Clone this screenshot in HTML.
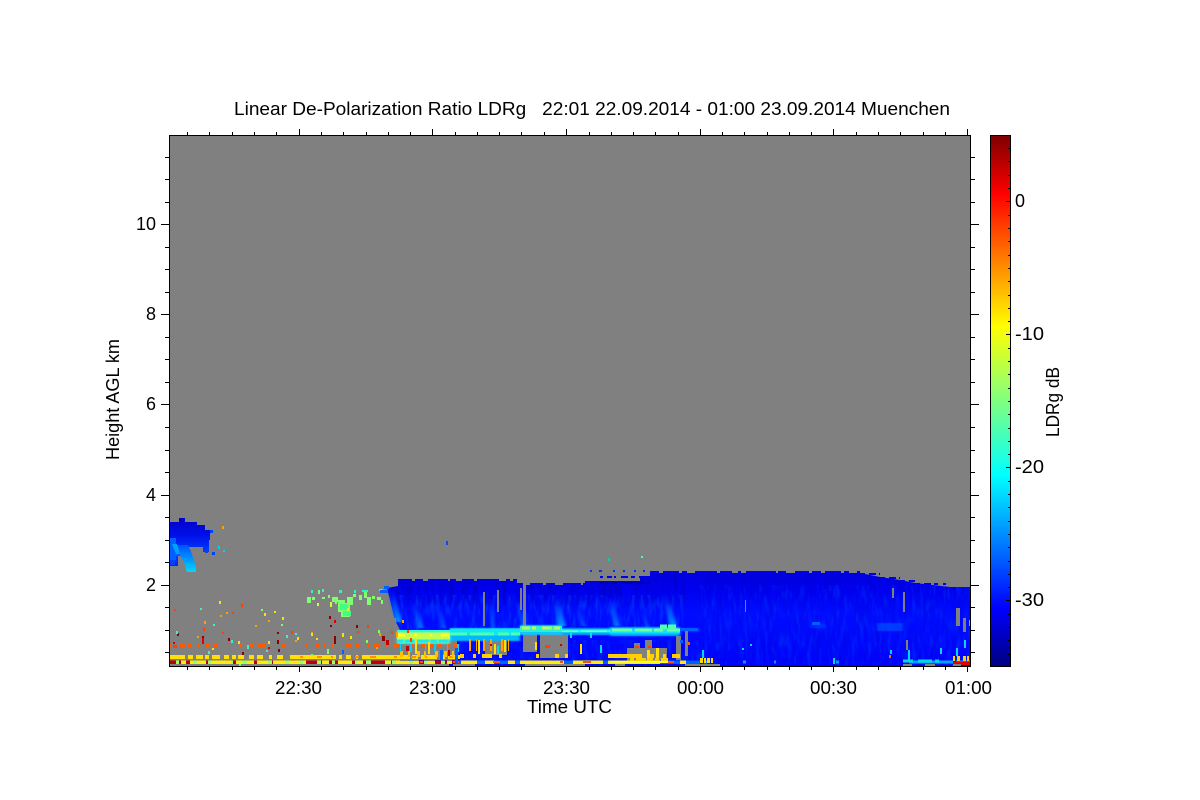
<!DOCTYPE html>
<html><head><meta charset="utf-8"><style>
html,body{margin:0;padding:0;background:#fff;width:1200px;height:800px;overflow:hidden}
svg{display:block}
text{font-family:"Liberation Sans",sans-serif;font-size:18px;fill:#000}
</style></head><body>
<svg width="1200" height="800" viewBox="0 0 1200 800" xmlns="http://www.w3.org/2000/svg">
<defs>
<linearGradient id="jet" x1="0" y1="0" x2="0" y2="1">
<stop offset="0" stop-color="#7f0000"/><stop offset=".11" stop-color="#ff0000"/><stop offset=".36" stop-color="#ffff00"/><stop offset=".5" stop-color="#80ff80"/><stop offset=".64" stop-color="#00ffff"/><stop offset=".89" stop-color="#0000ff"/><stop offset="1" stop-color="#00007f"/>
</linearGradient>
<linearGradient id="main" x1="0" y1="0" x2="0" y2="1">
<stop offset="0" stop-color="#0000dc"/><stop offset=".2" stop-color="#0000f0"/><stop offset=".45" stop-color="#000cff"/><stop offset="1" stop-color="#0004fa"/>
</linearGradient>
<linearGradient id="left" x1="0" y1="0" x2="0" y2="1">
<stop offset="0" stop-color="#0000c8"/><stop offset=".35" stop-color="#0010e8"/><stop offset=".7" stop-color="#0040ff"/><stop offset="1" stop-color="#0020f8"/>
</linearGradient>
<linearGradient id="tail" x1="0" y1="0" x2="0" y2="1">
<stop offset="0" stop-color="#0050ff"/><stop offset=".6" stop-color="#00a0ff"/><stop offset="1" stop-color="#00d8ff"/>
</linearGradient>
<linearGradient id="st" x1="0" y1="1" x2="0" y2="0">
<stop offset="0" stop-color="#00a0ff" stop-opacity=".9"/><stop offset=".55" stop-color="#0060ff" stop-opacity=".65"/><stop offset="1" stop-color="#0030ff" stop-opacity="0"/>
</linearGradient>
<filter id="fs" x="-30%" y="-10%" width="160%" height="120%"><feGaussianBlur stdDeviation="1.2 .5"/></filter>
<filter id="noise" x="0" y="0" width="100%" height="100%" color-interpolation-filters="sRGB">
<feTurbulence type="fractalNoise" baseFrequency="0.3 0.035" numOctaves="2" seed="7"/>
<feColorMatrix values="0 0 0 0 0  0 0 0 0 0  0 0 0 0 .62  2 0 0 0 -.85"/>
</filter>
<filter id="noise2" x="0" y="0" width="100%" height="100%" color-interpolation-filters="sRGB">
<feTurbulence type="fractalNoise" baseFrequency="0.25 0.06" numOctaves="2" seed="21"/>
<feColorMatrix values="0 0 0 0 0  0 0 0 0 .32  0 0 0 0 1  2.2 0 0 0 -1"/>
</filter>
<clipPath id="cm"><path d="M387 588L398 586V581H517V585H585V581H640V576H650V573H860L880 577L900 580L915 583L950 587H970V666H400V630L395 620Z"/></clipPath>
<clipPath id="cl"><path d="M170 522H179V518H185V522H197V525H205V530H210V540H209V552H203V547H188V556H178V566H170Z"/></clipPath>
</defs>

<text x="234" y="115" textLength="716" lengthAdjust="spacingAndGlyphs" xml:space="preserve">Linear De-Polarization Ratio LDRg   22:01 22.09.2014 - 01:00 23.09.2014 Muenchen</text>

<rect x="169" y="135" width="801" height="532" fill="#808080"/>

<g shape-rendering="crispEdges">
<rect x="385" y="570" width="586" height="97" fill="url(#main)" clip-path="url(#cm)"/>
<g clip-path="url(#cm)">
<rect x="385" y="570" width="300" height="35" filter="url(#noise)" opacity=".65"/>
<rect x="700" y="570" width="271" height="97" filter="url(#noise)" opacity=".2"/>
<rect x="385" y="595" width="300" height="36" filter="url(#noise2)" opacity=".65"/>
<rect x="455" y="640" width="245" height="26" filter="url(#noise2)" opacity=".4"/>
<rect x="700" y="585" width="271" height="80" filter="url(#noise2)" opacity=".4"/>
</g>
<g fill="none" stroke-width="2">
<path d="M398 580H517" stroke="#0000d8" stroke-dasharray="14 3 8 5 20 2 6 6 12 3 22 7 4 3 16 4"/>
<path d="M517 584H640" stroke="#0000e0" stroke-dasharray="6 7 13 3 9 8 18 2 11 4 6 9"/>
<path d="M650 572H860" stroke="#0000ec" stroke-dasharray="9 4 16 3 5 8 22 3 12 6 3 5 30 2 8 9 14 3"/>
<path d="M860 574H880M880 578H900M900 581H915M915 584H950" stroke="#0000ec" stroke-dasharray="5 4 7 3 4 5 3 6"/>
<path d="M600 577H650" stroke="#0000e8" stroke-dasharray="3 4 5 2 2 5 7 3 4 4"/>
<path d="M590 571H645" stroke="#0030ff" stroke-dasharray="2 7 3 11 2 8 2 9"/>
<path d="M600 583H650" stroke="#0000b0" stroke-dasharray="9 2 6 4 12 3"/>
</g>
</g>
<g filter="url(#fs)">
<path d="M388 590L394 590L402 622L395 622Z" fill="url(#st)"/>
<path d="M410 600L415 600L424 628L418 628Z" fill="url(#st)" opacity=".7"/>
<path d="M435 600L439 600L446 628L441 628Z" fill="url(#st)" opacity=".5"/>
<path d="M488 596L492 596L495 628L491 628Z" fill="url(#st)" opacity=".6"/>
<path d="M515 600L520 600L527 628L522 628Z" fill="url(#st)" opacity=".7"/>
<path d="M552 596L558 596L566 626L558 626Z" fill="url(#st)"/>
<path d="M575 606L580 606L586 626L581 626Z" fill="url(#st)" opacity=".5"/>
<path d="M608 598L613 598L620 626L614 626Z" fill="url(#st)" opacity=".8"/>
<path d="M640 610L644 610L650 628L646 628Z" fill="url(#st)" opacity=".5"/>
<path d="M662 594L667 594L677 626L670 626Z" fill="url(#st)"/>
<path d="M877 623H903V631H877Z" fill="#0050ff" opacity=".7"/>
<path d="M810 624H826V628H810Z" fill="#0040ff" opacity=".55"/>
<path d="M682 628H700V632H682Z" fill="#0050ff" opacity=".55"/>
</g>

<g shape-rendering="crispEdges">
<path fill="#808080" d="M385 618H396V634H400V666H385ZM398 642H456V660H398ZM443 636H457V656H443ZM485 635H507V655H485ZM523 583H526V640H523ZM523 633H537V652H523ZM540 632H568V658H540ZM483 592H485V626H483ZM497 590H499V612H497ZM520 588H522V610H520ZM627 648H667V662H627ZM634 643H640V650H634ZM645 640H652V650H645ZM676 636H681V660H676ZM685 630H688V656H685ZM892 588H894V598H892ZM903 592H905V612H903ZM956 608H960V626H956ZM963 618H966V632H963ZM745 600H746V612H745ZM906 640H908V650H906Z"/>
</g>

<!-- band -->
<g filter="url(#fs)">
<path d="M397 631H450V644H397Z" fill="#50f0d0"/>
<path d="M450 628H520V641H450Z" fill="#00b8ff"/>
<path d="M520 625H562V635H520Z" fill="#10c8ff"/>
<path d="M562 628H610V635H562Z" fill="#00a8ff"/>
<path d="M610 627H680V636H610Z" fill="#00b0ff"/>
</g>
<g shape-rendering="crispEdges" fill="none">
<path d="M397 631H450" stroke="#30f8d0" stroke-width="2"/>
<path d="M397 636H450" stroke="#c0ff50" stroke-width="7"/>
<path d="M397 635H450" stroke="#ffff20" stroke-width="3" stroke-dasharray="8 9 3 13 2 9"/>
<path d="M397 641H450" stroke="#20e8e8" stroke-width="3" stroke-dasharray="6 2 9 3 12 2"/>
<path d="M450 632H520" stroke="#10e8f0" stroke-width="7"/>
<path d="M450 634H520" stroke="#50ffb0" stroke-width="3"  stroke-dasharray="17 3 24 4 11 2 16 3"/>
<path d="M520 629H562" stroke="#30f0d0" stroke-width="6"/>
<path d="M522 628H560" stroke="#b0ff60" stroke-width="3" stroke-dasharray="8 2 4 6 10 2"/>
<path d="M562 631H610" stroke="#20f0e8" stroke-width="3"/>
<path d="M562 631H610" stroke="#70ffb0" stroke-width="1.5" stroke-dasharray="16 3 26 2"/>
<path d="M610 631H680" stroke="#10e0f8" stroke-width="5"/>
<path d="M612 630H680" stroke="#70ffa0" stroke-width="3" stroke-dasharray="20 3 17 2 9 4 20"/>
<path d="M660 627H676" stroke="#50ffb0" stroke-width="5" stroke-dasharray="7 1 8"/>
</g>

<g shape-rendering="crispEdges">
<g fill="none">
<path d="M169 657H460" stroke="#ffe000" stroke-width="4" stroke-dasharray="16 3 5 3 7 2 4 3 8 4 5 3 4 2 6 5 5 3 6 6 3 5 6 7 46 3 3 4 5 5 2 4 48 2 6 3"/>
<path d="M300 657H460" stroke="#ff9000" stroke-width="2" stroke-dasharray="3 14 5 9 2 22 4 11 6 18"/>
<path d="M460 656H680" stroke="#ffd000" stroke-width="4" stroke-dasharray="4 9 3 6 10 7 3 34 3 16 4 6 3 40 34 8"/>
<path d="M169 662H700" stroke="#ffee00" stroke-width="3.5"/>
<path d="M169 662H470" stroke="#c00000" stroke-width="3.5" stroke-dasharray="12 5 4 16 3 22 5 18 3 12 4 33 16 7 9 14 3 8 22 6 5 14 3 6 5 11"/>
<path d="M176 662H480" stroke="#a0ff50" stroke-width="3.5" stroke-dasharray="3 14 4 11 3 20 2 9 5 21 4 13 4 11"/>
<path d="M455 662H700" stroke="#0060ff" stroke-width="3.5" stroke-dasharray="6 16 8 9 14 7 5 44 9 30 5 52 20"/>
<path d="M420 662H700" stroke="#ff5000" stroke-width="2" stroke-dasharray="3 30 6 34 7 60 3 20 8 44"/>
<path d="M169 645.5H462" stroke="#ff5a00" stroke-width="3" stroke-dasharray="3 8 5 3 4 5 3 6 3 4 4 22 3 7 5 4 8 16 3 20 3 8 4 3 3 5 3 12 6 4 3 8 3 4 5 6 3 5 9 8"/>
<path d="M400 654H456" stroke="#ffc000" stroke-width="6" stroke-dasharray="3 5 2 7 3 4 2 9 3 6"/>
<path d="M400 648H460" stroke="#00d0ff" stroke-width="8" stroke-dasharray="1 9 2 13 1 8 2 11"/>
<path d="M469 645H510" stroke="#ffa000" stroke-width="12" stroke-dasharray="2 5 1 6 2 5 2 9"/>
<path d="M700 662H970" stroke="#00a0ff" stroke-width="3" stroke-dasharray="0 4 3 36 3 28 2 60 3 70 40"/>
<path d="M903 661H943" stroke="#00d8e0" stroke-width="3" stroke-dasharray="10 5 14 3 4 5 3"/>
<path d="M630 660H668" stroke="#ffd000" stroke-width="4" stroke-dasharray="4 2 10 1 6 2"/>
<path d="M610 662H668" stroke="#ffff20" stroke-width="2"/>
<path d="M700 660.5H713" stroke="#ffdf00" stroke-width="5" stroke-dasharray="3 1 2 1 3 1"/>
<path d="M953 663H970" stroke="#e00000" stroke-width="3.5"/>
<path d="M953 658.5H970" stroke="#ffd000" stroke-width="5" stroke-dasharray="2 2 3 3 3 1"/>
<path d="M169 665H700" stroke="#808080" stroke-width="2" stroke-dasharray="280 4 22 50 60 30 10 60"/>
<path d="M700 665H720M903 665H912M925 665H935M953 665H961" stroke="#808080" stroke-width="2"/>
</g>

<rect x="169" y="518" width="42" height="50" fill="url(#left)" clip-path="url(#cl)"/>
<path d="M176 545H188L192 554L196 566V572H187L183 560L178 552Z" fill="url(#tail)"/>
<path d="M170 538H176V552H180V556H176V560H170Z" fill="#0060ff"/>
<path d="M172 544H177L180 554H176Z" fill="#00a0ff"/>
<path d="M170 560h5v5h-5zM210 530h3v3h-3zM205 550h3v3h-3zM212 552h3v3h-3z" fill="#0040ff"/>
<path d="M218 546h2v3h-2zM223 550h2v2h-2z" fill="#00d0ff"/>
<path d="M222 526h2v3h-2z" fill="#ffa000"/>
<path d="M446 541h2v4h-2z" fill="#0050ff"/>
<path d="M608 558h2v3h-2z" fill="#00d0b0"/><path d="M641 556h2v2h-2z" fill="#40ffb0"/>

<path fill="#80ff70" d="M307 597h4v6h-4zM312 597h3v3h-3zM318 590h2v4h-2zM322 597h3v2h-3zM328 595h2v3h-2zM335 600h2v4h-2zM338 600h12v17h-12zM332 597h6v5h-6zM347 597h6v8h-6zM353 594h3v3h-3zM359 595h3v5h-3zM364 590h3v8h-3zM367 597h4v8h-4zM372 596h3v3h-3zM377 597h4v3h-4zM381 600h2v4h-2z"/>
<path fill="#30f0d0" d="M311 590h2v3h-2zM322 589h2v3h-2zM339 590h3v3h-3zM354 590h2v3h-2zM362 590h6v2h-6zM379 589h4v2h-4z"/>
<path fill="#40ff80" d="M340 604h8v6h-8zM343 611h8v5h-8z"/>
<path fill="#808080" d="M338 612h3v5h-3zM345 600h2v3h-2z"/>
<path fill="#d0ff40" d="M330 602h2v5h-2zM317 603h2v3h-2zM347 608h2v3h-2z"/>
<path fill="#0060ff" d="M380 590h8v3h-8zM384 586h5v3h-5z"/>

<path fill="#ff4000" d="M174 609h2v2h-2zM241 604h2v3h-2zM203 628h2v3h-2zM232 612h2v2h-2zM367 625h2v3h-2zM173 645h4v3h-4zM357 631h2v2h-2zM291 631h2v3h-2zM222 632h2v2h-2z"/>
<path fill="#8b0000" d="M177 633h2v3h-2zM202 636h2v4h-2zM228 638h2v3h-2zM277 640h2v4h-2zM278 649h2v3h-2zM277 632h2v2h-2zM329 616h2v3h-2zM334 621h2v2h-2zM330 625h2v2h-2zM334 636h2v8h-2zM382 636h3v5h-3zM356 625h2v3h-2zM242 652h2v3h-2z"/>
<path fill="#e00000" d="M202 638h2v6h-2zM334 620h2v3h-2zM268 647h2v2h-2zM173 642h2v2h-2z"/>
<path fill="#ffa000" d="M220 615h2v2h-2zM204 621h2v3h-2zM226 612h2v2h-2zM197 636h2v2h-2zM255 625h2v2h-2zM295 640h2v2h-2zM268 620h2v2h-2zM311 632h2v2h-2zM379 633h2v3h-2zM350 636h2v2h-2zM376 647h2v2h-2zM396 632h2v5h-2zM402 620h2v3h-2z"/>
<path fill="#ffe000" d="M219 601h2v3h-2zM264 613h2v3h-2zM274 611h2v2h-2zM282 617h2v3h-2zM311 633h2v3h-2zM316 638h2v2h-2zM297 637h2v3h-2zM350 636h2v3h-2zM342 633h2v4h-2zM238 641h2v3h-2zM212 648h2v2h-2zM268 641h2v3h-2z"/>
<path fill="#40f0c0" d="M176 631h2v3h-2zM200 608h2v2h-2zM247 645h2v4h-2zM213 624h2v2h-2zM295 633h2v2h-2zM286 635h2v3h-2zM266 650h2v2h-2zM231 640h2v3h-2zM208 651h2v3h-2z"/>
<path fill="#80ff60" d="M281 624h2v2h-2zM261 609h2v2h-2zM327 649h2v5h-2zM311 654h2v2h-2zM366 640h2v3h-2zM378 630h2v3h-2zM239 664h2v2h-2z"/>
<path fill="#0060ff" d="M342 650h2v4h-2zM440 650h3v10h-3zM455 648h3v16h-3z"/>
<path fill="#00e0e0" d="M570 632h2v6h-2zM600 645h2v8h-2zM590 632h2v6h-2zM497 646h2v8h-2z"/>
<path fill="#ffe000" d="M478 640h2v14h-2zM494 644h2v10h-2zM504 640h2v12h-2zM535 642h2v8h-2zM580 644h2v10h-2zM415 640h2v14h-2zM428 642h2v12h-2zM647 650h3v8h-3zM656 648h3v10h-3z"/>
<path fill="#ff4000" d="M545 645h5v3h-5zM635 646h4v2h-4zM648 646h3v2h-3zM407 630h2v3h-2zM410 638h2v4h-2zM391 631h2v3h-2z"/>
<path fill="#c00000" d="M386 640h3v5h-3zM406 646h3v5h-3zM448 650h2v6h-2zM490 644h2v2h-2zM560 644h2v2h-2z"/>
<path fill="#00d8ff" d="M890 650h2v4h-2zM908 650h2v10h-2zM940 648h2v6h-2zM956 648h2v8h-2zM964 640h2v8h-2zM969 620h2v6h-2zM742 648h2v2h-2zM702 650h2v8h-2zM833 658h2v6h-2zM750 644h2v2h-2z"/>
<path fill="#ff6000" d="M889 655h2v3h-2zM688 642h2v3h-2z"/>
<path fill="#0060ff" d="M680 628h18v3h-18zM812 622h8v3h-8zM680 640h3v3h-3z"/>
</g>

<g shape-rendering="crispEdges" fill="none" stroke="#000" stroke-width="1">
<path d="M169.5 135.5H970.5V666.5H169.5Z" stroke-width="1.2"/>
<path d="M299.5 667V672M432.5 667V672M566.5 667V672M700.5 667V672M833.5 667V672M967.5 667V672M299.5 135V129M432.5 135V129M566.5 135V129M700.5 135V129M833.5 135V129M967.5 135V129"/>
<path d="M187.5 667V670M209.5 667V670M232.5 667V670M254.5 667V670M276.5 667V670M321.5 667V670M343.5 667V670M366.5 667V670M388.5 667V670M410.5 667V670M455.5 667V670M477.5 667V670M499.5 667V670M521.5 667V670M544.5 667V670M589.5 667V670M611.5 667V670M633.5 667V670M655.5 667V670M678.5 667V670M722.5 667V670M744.5 667V670M767.5 667V670M789.5 667V670M811.5 667V670M856.5 667V670M878.5 667V670M900.5 667V670M923.5 667V670M945.5 667V670"/>
<path d="M187.5 135V132M209.5 135V132M232.5 135V132M254.5 135V132M276.5 135V132M321.5 135V132M343.5 135V132M366.5 135V132M388.5 135V132M410.5 135V132M455.5 135V132M477.5 135V132M499.5 135V132M521.5 135V132M544.5 135V132M589.5 135V132M611.5 135V132M633.5 135V132M655.5 135V132M678.5 135V132M722.5 135V132M744.5 135V132M767.5 135V132M789.5 135V132M811.5 135V132M856.5 135V132M878.5 135V132M900.5 135V132M923.5 135V132M945.5 135V132"/>
<path d="M161 224.5H169M161 314.5H169M161 404.5H169M161 495.5H169M161 585.5H169M971 224.5H979M971 314.5H979M971 404.5H979M971 495.5H979M971 585.5H979"/>
<path d="M165 157.5H169M165 179.5H169M165 202.5H169M165 247.5H169M165 269.5H169M165 292.5H169M165 337.5H169M165 359.5H169M165 382.5H169M165 427.5H169M165 450.5H169M165 472.5H169M165 517.5H169M165 540.5H169M165 562.5H169M165 607.5H169M165 630.5H169M165 652.5H169"/>
<path d="M971 157.5H975M971 179.5H975M971 202.5H975M971 247.5H975M971 269.5H975M971 292.5H975M971 337.5H975M971 359.5H975M971 382.5H975M971 427.5H975M971 450.5H975M971 472.5H975M971 517.5H975M971 540.5H975M971 562.5H975M971 607.5H975M971 630.5H975M971 652.5H975"/>
</g>

<g shape-rendering="crispEdges">
<rect x="990.5" y="135.5" width="20" height="531" fill="url(#jet)" stroke="#000"/>
<path fill="none" stroke="#000" d="M1008 148.5H1010M1008 161.5H1010M1008 175.5H1010M1008 188.5H1010M1008 215.5H1010M1008 228.5H1010M1008 241.5H1010M1008 255.5H1010M1008 268.5H1010M1008 281.5H1010M1008 295.5H1010M1008 308.5H1010M1008 321.5H1010M1008 348.5H1010M1008 361.5H1010M1008 374.5H1010M1008 388.5H1010M1008 401.5H1010M1008 414.5H1010M1008 428.5H1010M1008 441.5H1010M1008 454.5H1010M1008 481.5H1010M1008 494.5H1010M1008 507.5H1010M1008 521.5H1010M1008 534.5H1010M1008 547.5H1010M1008 561.5H1010M1008 574.5H1010M1008 587.5H1010M1008 614.5H1010M1008 627.5H1010M1008 640.5H1010M1008 654.5H1010M1006 201.5H1010M1006 334.5H1010M1006 467.5H1010M1006 600.5H1010"/>
</g>

<text x="136" y="230" textLength="20" lengthAdjust="spacingAndGlyphs">10</text>
<text x="146" y="320" textLength="10" lengthAdjust="spacingAndGlyphs">8</text><text x="146" y="410" textLength="10" lengthAdjust="spacingAndGlyphs">6</text><text x="146" y="501" textLength="10" lengthAdjust="spacingAndGlyphs">4</text><text x="146" y="591" textLength="10" lengthAdjust="spacingAndGlyphs">2</text>
<text x="275" y="694" textLength="47" lengthAdjust="spacingAndGlyphs">22:30</text>
<text x="409" y="694" textLength="47" lengthAdjust="spacingAndGlyphs">23:00</text>
<text x="543" y="694" textLength="47" lengthAdjust="spacingAndGlyphs">23:30</text>
<text x="677" y="694" textLength="47" lengthAdjust="spacingAndGlyphs">00:00</text>
<text x="810" y="694" textLength="47" lengthAdjust="spacingAndGlyphs">00:30</text>
<text x="945" y="694" textLength="47" lengthAdjust="spacingAndGlyphs">01:00</text>
<text x="527" y="713" textLength="85" lengthAdjust="spacingAndGlyphs">Time UTC</text>
<text transform="translate(119 460) rotate(-90)" textLength="121" lengthAdjust="spacingAndGlyphs">Height AGL km</text>
<text x="1015" y="207" textLength="10" lengthAdjust="spacingAndGlyphs">0</text>
<text x="1015" y="340" textLength="29" lengthAdjust="spacingAndGlyphs">-10</text>
<text x="1015" y="473" textLength="29" lengthAdjust="spacingAndGlyphs">-20</text>
<text x="1015" y="606" textLength="29" lengthAdjust="spacingAndGlyphs">-30</text>
<text transform="translate(1059 437) rotate(-90)" textLength="70" lengthAdjust="spacingAndGlyphs">LDRg dB</text>
</svg>
</body></html>
